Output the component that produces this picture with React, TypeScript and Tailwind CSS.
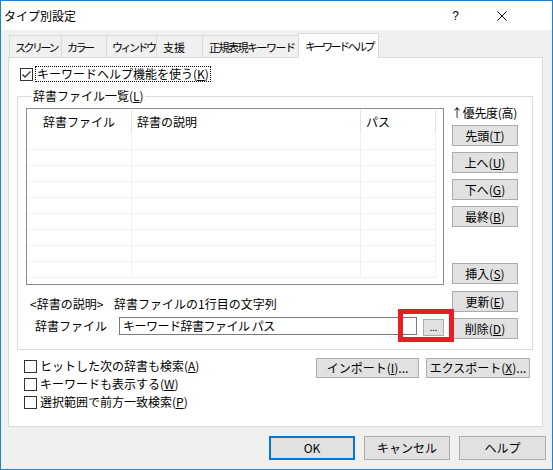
const font = "font-['Noto_Sans_CJK_JP','Noto_Sans',sans-serif]";

function Btn({ children, className = "" }: { children: React.ReactNode; className?: string }) {
  return (
    <div className={`flex items-center justify-center bg-[#e1e1e1] border border-[#adadad] text-[12px] leading-[16px] text-black whitespace-nowrap ${className}`}>
      {children}
    </div>
  );
}

function CheckBox({ checked = false }: { checked?: boolean }) {
  return (
    <div className="w-[13px] h-[13px] shrink-0 border border-[#333333] bg-white flex items-center justify-center">
      {checked && (
        <svg width="11" height="11" viewBox="0 0 11 11">
          <path d="M1.5 5.5 L4 8 L9.5 2.5" fill="none" stroke="#333333" strokeWidth="1.3" />
        </svg>
      )}
    </div>
  );
}

function Tab({ label, w, active = false, track = "tracking-[-2.5px]" }: { label: string; w: string; active?: boolean; track?: string }) {
  return active ? (
    <div className={`${w} ${track} h-[25px] -ml-px -mb-px relative z-10 bg-white border border-b-0 border-[#d9d9d9] pl-[6px] pt-[4px] text-[11px] leading-[16px] whitespace-nowrap overflow-hidden`}>
      {label}
    </div>
  ) : (
    <div className={`${w} ${track} h-[22px] -ml-px first:ml-0 bg-[#f0f0f0] border border-b-0 border-[#d9d9d9] pl-[5px] pt-[3px] text-[11px] leading-[16px] whitespace-nowrap overflow-hidden`}>
      {label}
    </div>
  );
}

function ListView() {
  const rows = Array.from({ length: 9 });
  return (
    <div className="w-[418px] h-[177px] border border-[#8c8c8c] bg-white overflow-hidden">
      <div className="flex h-[25px] text-[12px] leading-[16px]">
        <div className="w-[105px] flex items-center justify-center border-r border-[#e5e5e5] my-[1px]">辞書ファイル</div>
        <div className="w-[229px] flex items-center pl-[5px] border-r border-[#e5e5e5] my-[1px]">辞書の説明</div>
        <div className="w-[75px] flex items-center pl-[5px] border-r border-[#e5e5e5] my-[1px]">パス</div>
      </div>
      <div className="w-[410px]">
        {rows.map((_, i) => (
          <div key={i} className="flex h-[16px] border-b border-[#f0f0f0]">
            <div className="w-[105px] border-r border-[#f0f0f0]" />
            <div className="w-[229px] border-r border-[#f0f0f0]" />
            <div className="w-[75px] border-r border-[#f0f0f0]" />
          </div>
        ))}
      </div>
    </div>
  );
}

export default function App() {
  return (
    <div className={`${font} w-[553px] h-[470px] border border-[#1883d7] bg-[#f0f0f0] flex flex-col text-black overflow-hidden`}>
      {/* title bar */}
      <div className="h-[29px] bg-white flex items-center shrink-0">
        <span className="pl-[3px] text-[12px] leading-[16px]">タイプ別設定</span>
        <span className="ml-auto mr-[38px] text-[12px] leading-[16px] font-['Liberation_Sans',sans-serif]">?</span>
        <svg className="mr-[45px]" width="10" height="10" viewBox="0 0 10 10">
          <path d="M0.5 0.5 L9.5 9.5 M9.5 0.5 L0.5 9.5" stroke="#000" strokeWidth="1" />
        </svg>
      </div>

      {/* tabs */}
      <div className="flex items-end h-[24px] mt-[3px] ml-[8px] shrink-0">
        <Tab label="スクリーン" w="w-[53px]" />
        <Tab label="カラー" w="w-[46px]" />
        <Tab label="ウィンドウ" w="w-[51px]" />
        <Tab label="支援" w="w-[47px]" track="tracking-[0px] !pl-[6px]" />
        <Tab label="正規表現キーワード" w="w-[97px]" track="tracking-[-1.5px] !pl-[6px]" />
        <Tab label="キーワードヘルプ" w="w-[81px]" active />
      </div>

      {/* panel */}
      <div className="ml-[7px] w-[535px] h-[370px] bg-white border border-[#d9d9d9] flex flex-col shrink-0 text-[12px] leading-[16px]">
        <div className="flex items-center mt-[8px] ml-[11px] h-[16px]">
          <CheckBox checked />
          <span className="ml-[2px] border border-dotted border-black px-[1px] leading-[14px]">
            キーワードヘルプ機能を使う(<u>K</u>)
          </span>
        </div>

        <fieldset className="mt-[6px] ml-[8px] w-[516px] border border-[#dcdcdc] pl-[8px] pb-[10px]">
          <legend className="ml-[6px] px-[1px] leading-[16px]">辞書ファイル一覧(<u>L</u>)</legend>
          <div className="flex items-start">
            <div className="mt-[4px] w-[418px] flex flex-col">
              <ListView />
              <div className="flex mt-[11px] h-[16px]">
                <span className="w-[88px] pl-[4px]">&lt;辞書の説明&gt;</span>
                <span>辞書ファイルの1行目の文字列</span>
              </div>
              <div className="relative flex items-center mt-[5px] h-[18px]">
                <span className="w-[93px] pl-[9px]">辞書ファイル</span>
                <div className="w-[298px] h-[18px] border border-[#7a7a7a] bg-white pl-[3px] flex items-center tracking-[-0.5px]">
                  キーワード辞書ファイル パス
                </div>
                <Btn className="ml-[6px] w-[21px] h-[17px] mt-[3px] !text-[9px] !leading-[10px]">...</Btn>
                <div className="absolute left-[372px] top-[-8px] w-[56px] h-[33px] border-[5px] border-[#ed1c24]" />
              </div>
            </div>
            <div className="ml-[8px] mt-[1px] w-[66px] flex flex-col">
              <span className="h-[16px] whitespace-nowrap -ml-[1px] tracking-[-0.3px]">↑優先度(高)</span>
              <Btn className="mt-[4px] h-[21px]">先頭(<u>T</u>)</Btn>
              <Btn className="mt-[6px] h-[21px]">上へ(<u>U</u>)</Btn>
              <Btn className="mt-[6px] h-[21px]">下へ(<u>G</u>)</Btn>
              <Btn className="mt-[6px] h-[21px]">最終(<u>B</u>)</Btn>
              <Btn className="mt-[36px] h-[21px]">挿入(<u>S</u>)</Btn>
              <Btn className="mt-[7px] h-[21px]">更新(<u>E</u>)</Btn>
              <Btn className="mt-[6px] h-[21px]">削除(<u>D</u>)</Btn>
            </div>
          </div>
        </fieldset>

        <div className="flex mt-[7px]">
          <div className="ml-[15px] flex flex-col">
            {[
              ["ヒットした次の辞書も検索(", "A", ")"],
              ["キーワードも表示する(", "W", ")"],
              ["選択範囲で前方一致検索(", "P", ")"],
            ].map(([a, k, b]) => (
              <div key={k} className="flex items-center h-[18px]">
                <CheckBox />
                <span className="ml-[3px]">
                  {a}
                  <u>{k}</u>
                  {b}
                </span>
              </div>
            ))}
          </div>
          <div className="ml-auto mr-[12px] flex gap-[7px] mt-[1px]">
            <Btn className="w-[103px] h-[20px]">インポート(<u>I</u>)...</Btn>
            <Btn className="w-[104px] h-[20px]">エクスポート(<u>X</u>)...</Btn>
          </div>
        </div>
      </div>

      {/* dialog buttons */}
      <div className="flex justify-end gap-[9px] mt-[9px] mr-[6px] text-[12px] leading-[16px]">
        <div className="w-[86px] h-[24px] flex items-center justify-center bg-[#e1e1e1] border-2 border-[#0078d7]">OK</div>
        <Btn className="w-[86px] h-[24px]">キャンセル</Btn>
        <Btn className="w-[87px] h-[24px]">ヘルプ</Btn>
      </div>
    </div>
  );
}
